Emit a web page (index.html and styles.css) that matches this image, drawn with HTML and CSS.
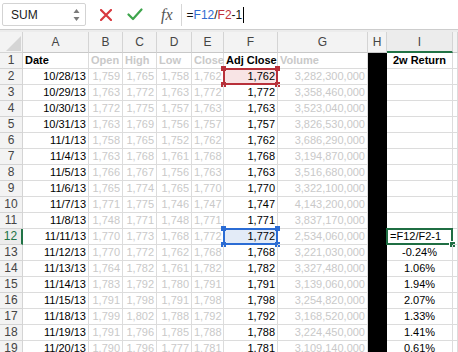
FILE: index.html
```html
<!DOCTYPE html>
<html lang="en">
  <head>
    <meta charset="UTF-8" />
    <title>SPX 2w Return</title>
    <link rel="stylesheet" href="styles.css">
  </head>
  <body>
    <!-- Formula bar -->
    <div class="toolbar">
      <div class="namebox">
        <span>SUM</span>
        <svg class="spin" width="7" height="14" viewBox="0 0 7 14">
          <path d="M0.5 5 L3.5 1 L6.5 5 Z" fill="#7a7a7a" />
          <path d="M0.5 9 L3.5 13 L6.5 9 Z" fill="#7a7a7a" />
        </svg>
      </div>
      <svg class="btn-cancel" width="12" height="12" viewBox="0 0 12 12">
        <path d="M1 1 L11 11 M11 1 L1 11" stroke="#d8383f" stroke-width="2.2" stroke-linecap="round" />
      </svg>
      <svg class="btn-enter" width="16" height="13" viewBox="0 0 16 13">
        <path d="M1.5 6.5 L6 11 L14.5 1.5" stroke="#3ea54c" stroke-width="2.2" fill="none" stroke-linecap="round" stroke-linejoin="round" />
      </svg>
      <span class="fx">fx</span>
      <div class="formula">=<span class="ref-blue">F12</span>/<span class="ref-red">F2</span>-1<span class="caret"></span></div>
    </div>
    <div class="gap"></div>

    <!-- Sheet -->
    <div class="sheet" id="sheet"></div>

    <script>
      var letters = ["A", "B", "C", "D", "E", "F", "G", "H", "I", ""];
      var rows = [
        ["Date", "Open", "High", "Low", "Close", "Adj Close", "Volume"],
        ["10/28/13", "1,759", "1,765", "1,758", "1,762", "1,762", "3,282,300,000"],
        ["10/29/13", "1,763", "1,772", "1,763", "1,772", "1,772", "3,358,460,000"],
        ["10/30/13", "1,772", "1,775", "1,757", "1,763", "1,763", "3,523,040,000"],
        ["10/31/13", "1,763", "1,769", "1,756", "1,757", "1,757", "3,826,530,000"],
        ["11/1/13", "1,758", "1,765", "1,752", "1,762", "1,762", "3,686,290,000"],
        ["11/4/13", "1,763", "1,768", "1,761", "1,768", "1,768", "3,194,870,000"],
        ["11/5/13", "1,766", "1,767", "1,756", "1,763", "1,763", "3,516,680,000"],
        ["11/6/13", "1,765", "1,774", "1,765", "1,770", "1,770", "3,322,100,000"],
        ["11/7/13", "1,771", "1,775", "1,746", "1,747", "1,747", "4,143,200,000"],
        ["11/8/13", "1,748", "1,771", "1,748", "1,771", "1,771", "3,837,170,000"],
        ["11/11/13", "1,770", "1,773", "1,768", "1,772", "1,772", "2,534,060,000"],
        ["11/12/13", "1,770", "1,772", "1,762", "1,768", "1,768", "3,221,030,000"],
        ["11/13/13", "1,764", "1,782", "1,761", "1,782", "1,782", "3,327,480,000"],
        ["11/14/13", "1,783", "1,792", "1,780", "1,791", "1,791", "3,139,060,000"],
        ["11/15/13", "1,791", "1,798", "1,791", "1,798", "1,798", "3,254,820,000"],
        ["11/18/13", "1,799", "1,802", "1,788", "1,792", "1,792", "3,168,520,000"],
        ["11/19/13", "1,791", "1,796", "1,785", "1,788", "1,788", "3,224,450,000"],
        ["11/20/13", "1,790", "1,796", "1,777", "1,781", "1,781", "3,109,140,000"]
      ];
      var returns = {
        13: "-0.24%", 14: "1.06%", 15: "1.94%", 16: "2.07%",
        17: "1.33%", 18: "1.41%", 19: "0.61%"
      };

      function frame(kind, handles) {
        var html = '<div class="frame ' + kind + '">';
        handles.forEach(function (h) {
          html += '<span class="handle ' + h + '"></span>';
        });
        return html + "</div>";
      }

      var html = '<div class="corner"><span class="tri"></span></div>';
      letters.forEach(function (l) {
        html += '<div class="col-head' + (l === "I" ? " active" : "") + '">' + l + "</div>";
      });

      rows.forEach(function (row, i) {
        var n = i + 1;
        var first = n === 1;
        html += '<div class="row-head' + (n === 12 ? " active" : "") + '">' + n + "</div>";
        row.forEach(function (val, c) {
          var cls = "cell";
          if (first) cls += " bold";
          else cls += " num";
          if (c >= 1 && c <= 4 || c === 6) cls += " muted";
          var extra = "";
          if (c === 5 && n === 2) {
            cls += " sel-red";
            extra = frame("red", ["tl", "tr", "bl", "br"]);
          }
          if (c === 5 && n === 12) {
            cls += " sel-blue";
            extra = frame("blue", ["tl", "tr", "bl", "br"]);
          }
          html += '<div class="' + cls + '">' + val + extra + "</div>";
        });
        html += '<div class="cell blackout"></div>';
        if (first) {
          html += '<div class="cell bold center">2w Return</div>';
        } else if (n === 12) {
          html += '<div class="cell editing">=F12/F2-1' + frame("green", ["br"]) + "</div>";
        } else {
          html += '<div class="cell center">' + (returns[n] || "") + "</div>";
        }
        html += '<div class="cell"></div>';
      });

      document.getElementById("sheet").innerHTML = html;
    </script>
  </body>
</html>
```

FILE: styles.css
```css
body {
  margin: 0;
  width: 458px;
  height: 352px;
  overflow: hidden;
  background-color: #fff;
  font-family: "Liberation Sans", Arial, sans-serif;
  color: #000;
}

/* formula bar */

.toolbar {
  display: flex;
  align-items: center;
  height: 29px;
  border-bottom: 1px solid #cdcdcd;
}

.namebox {
  display: flex;
  align-items: center;
  justify-content: space-between;
  box-sizing: border-box;
  width: 84px;
  height: 23px;
  margin-left: 2px;
  padding: 0 5px 0 8px;
  border: 1px solid #d3d3d3;
  border-radius: 2px;
  font-size: 12px;
  color: #1a1a1a;
}

.btn-cancel {
  margin-left: 14px;
}

.btn-enter {
  margin-left: 15px;
}

.fx {
  margin-left: 18px;
  padding-right: 8px;
  border-right: 1px solid #d6d6d6;
  font-family: "Liberation Serif", "Times New Roman", serif;
  font-style: italic;
  font-size: 16px;
  line-height: 22px;
  color: #555;
}

.formula {
  display: flex;
  align-items: center;
  padding-left: 5px;
  font-size: 12px;
  color: #111;
}

.ref-blue {
  color: #2f6bd0;
}

.ref-red {
  color: #c0313b;
}

.caret {
  display: inline-block;
  width: 1px;
  height: 16px;
  margin-left: 1px;
  background-color: #000;
}

.gap {
  height: 2px;
  background-color: #ececec;
}

/* sheet grid */

.sheet {
  display: grid;
  grid-template-columns: 23px 66px 34px 34px 35px 32px 54px 90px 19px 66px 5px;
  grid-template-rows: 21px;
  grid-auto-rows: 16px;
  font-size: 11px;
  line-height: 15px;
}

.corner,
.col-head,
.row-head {
  position: relative;
  box-sizing: border-box;
  background-color: #f3f3f3;
  border-right: 1px solid #d4d4d4;
  border-bottom: 1px solid #d4d4d4;
  color: #454545;
  font-size: 12px;
  text-align: center;
}

.col-head {
  line-height: 20px;
  border-bottom-color: #c8c8c8;
}

.col-head.active {
  background-color: #ececec;
  border-bottom: 2px solid #217346;
}

.row-head.active {
  background-color: #ececec;
  border-right: 2px solid #217346;
  color: #217346;
}

.tri {
  position: absolute;
  right: 1px;
  bottom: 1px;
  width: 0;
  height: 0;
  border-left: 15px solid transparent;
  border-bottom: 15px solid #d5d5d5;
}

.cell {
  position: relative;
  box-sizing: border-box;
  padding: 0 2px;
  border-right: 1px solid #dcdcdc;
  border-bottom: 1px solid #dcdcdc;
  white-space: nowrap;
}

.bold {
  font-weight: bold;
}

.num {
  text-align: right;
}

.center {
  text-align: center;
}

.muted {
  color: #c9c9c9;
}

.blackout {
  background-color: #000;
  border-color: #000;
}

.sel-red {
  background-color: #f8e4e5;
}

.sel-blue {
  background-color: #e3ebf7;
}

.editing {
  padding-left: 3px;
}

/* selection frames */

.frame {
  position: absolute;
  top: -1px;
  left: -1px;
  right: -1px;
  bottom: -1px;
  border: 2px solid;
}

.frame.red {
  border-color: #b8303a;
}

.frame.blue {
  border-color: #2b6cd4;
}

.frame.green {
  border-color: #1f6e43;
}

.handle {
  position: absolute;
  width: 5px;
  height: 5px;
}

.frame.red .handle {
  background-color: #b8303a;
}

.frame.blue .handle {
  background-color: #2b6cd4;
}

.frame.green .handle {
  background-color: #1f6e43;
  outline: 1px solid #fff;
}

.handle.tl {
  top: -4px;
  left: -4px;
}

.handle.tr {
  top: -4px;
  right: -4px;
}

.handle.bl {
  bottom: -4px;
  left: -4px;
}

.handle.br {
  bottom: -4px;
  right: -4px;
}
```
